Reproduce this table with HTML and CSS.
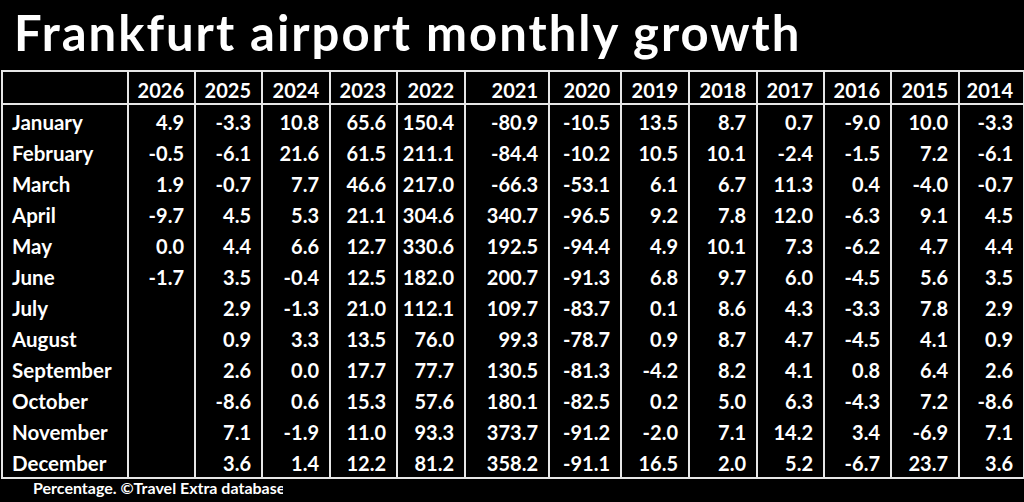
FILE: index.html
```html
<!DOCTYPE html>
<html lang="en">
<head>
<meta charset="utf-8">
<title>Frankfurt airport monthly growth</title>
<link rel="stylesheet" href="styles.css">
</head>
<body>
<div class="page">
  <h1 class="title">Frankfurt airport monthly growth</h1>
  <table class="grid">
    <colgroup>
      <col class="c-month">
      <col style="width:67px"><col style="width:67px"><col style="width:68px"><col style="width:67px"><col style="width:68px">
      <col style="width:84px"><col style="width:72px"><col style="width:68px"><col style="width:68px"><col style="width:67px">
      <col style="width:67px"><col style="width:68px"><col style="width:65px">
    </colgroup>
    <thead>
      <tr><th></th><th>2026</th><th>2025</th><th>2024</th><th>2023</th><th>2022</th><th>2021</th><th>2020</th><th>2019</th><th>2018</th><th>2017</th><th>2016</th><th>2015</th><th>2014</th></tr>
    </thead>
    <tbody>
      <tr><th>January</th><td>4.9</td><td>-3.3</td><td>10.8</td><td>65.6</td><td>150.4</td><td>-80.9</td><td>-10.5</td><td>13.5</td><td>8.7</td><td>0.7</td><td>-9.0</td><td>10.0</td><td>-3.3</td></tr>
      <tr><th>February</th><td>-0.5</td><td>-6.1</td><td>21.6</td><td>61.5</td><td>211.1</td><td>-84.4</td><td>-10.2</td><td>10.5</td><td>10.1</td><td>-2.4</td><td>-1.5</td><td>7.2</td><td>-6.1</td></tr>
      <tr><th>March</th><td>1.9</td><td>-0.7</td><td>7.7</td><td>46.6</td><td>217.0</td><td>-66.3</td><td>-53.1</td><td>6.1</td><td>6.7</td><td>11.3</td><td>0.4</td><td>-4.0</td><td>-0.7</td></tr>
      <tr><th>April</th><td>-9.7</td><td>4.5</td><td>5.3</td><td>21.1</td><td>304.6</td><td>340.7</td><td>-96.5</td><td>9.2</td><td>7.8</td><td>12.0</td><td>-6.3</td><td>9.1</td><td>4.5</td></tr>
      <tr><th>May</th><td>0.0</td><td>4.4</td><td>6.6</td><td>12.7</td><td>330.6</td><td>192.5</td><td>-94.4</td><td>4.9</td><td>10.1</td><td>7.3</td><td>-6.2</td><td>4.7</td><td>4.4</td></tr>
      <tr><th>June</th><td>-1.7</td><td>3.5</td><td>-0.4</td><td>12.5</td><td>182.0</td><td>200.7</td><td>-91.3</td><td>6.8</td><td>9.7</td><td>6.0</td><td>-4.5</td><td>5.6</td><td>3.5</td></tr>
      <tr><th>July</th><td></td><td>2.9</td><td>-1.3</td><td>21.0</td><td>112.1</td><td>109.7</td><td>-83.7</td><td>0.1</td><td>8.6</td><td>4.3</td><td>-3.3</td><td>7.8</td><td>2.9</td></tr>
      <tr><th>August</th><td></td><td>0.9</td><td>3.3</td><td>13.5</td><td>76.0</td><td>99.3</td><td>-78.7</td><td>0.9</td><td>8.7</td><td>4.7</td><td>-4.5</td><td>4.1</td><td>0.9</td></tr>
      <tr><th>September</th><td></td><td>2.6</td><td>0.0</td><td>17.7</td><td>77.7</td><td>130.5</td><td>-81.3</td><td>-4.2</td><td>8.2</td><td>4.1</td><td>0.8</td><td>6.4</td><td>2.6</td></tr>
      <tr><th>October</th><td></td><td>-8.6</td><td>0.6</td><td>15.3</td><td>57.6</td><td>180.1</td><td>-82.5</td><td>0.2</td><td>5.0</td><td>6.3</td><td>-4.3</td><td>7.2</td><td>-8.6</td></tr>
      <tr><th>November</th><td></td><td>7.1</td><td>-1.9</td><td>11.0</td><td>93.3</td><td>373.7</td><td>-91.2</td><td>-2.0</td><td>7.1</td><td>14.2</td><td>3.4</td><td>-6.9</td><td>7.1</td></tr>
      <tr><th>December</th><td></td><td>3.6</td><td>1.4</td><td>12.2</td><td>81.2</td><td>358.2</td><td>-91.1</td><td>16.5</td><td>2.0</td><td>5.2</td><td>-6.7</td><td>23.7</td><td>3.6</td></tr>
    </tbody>
  </table>
  <div class="footer"><span class="note">Percentage. ©Travel Extra database</span></div>
</div>
</body>
</html>
```
FILE: styles.css
```css
html, body {
  margin: 0;
  padding: 0;
  background: #000;
}
.page {
  width: 1024px;
  height: 502px;
  overflow: hidden;
  background: #000;
  color: #fff;
  font-family: Lato, "Open Sans", sans-serif;
  font-weight: 700;
}
.title {
  margin: 0;
  height: 70px;
  box-sizing: border-box;
  padding: 4px 0 0 14px;
  font-size: 49px;
  line-height: 56px;
  font-weight: 700;
  letter-spacing: 2px;
  white-space: nowrap;
}
.grid {
  border-collapse: collapse;
  table-layout: fixed;
  width: 1023px;
  margin-left: 1px;
  font-size: 20px;
}
.c-month { width: 126px; }
.grid th, .grid td {
  border-left: 2px solid #e6e6e6;
  border-right: 2px solid #e6e6e6;
  padding: 4px 10px 0 0;
  text-align: right;
  white-space: nowrap;
  font-weight: 700;
  line-height: 27px;
}
.grid thead th {
  border-top: 2px solid #e6e6e6;
  border-bottom: 2px solid #e6e6e6;
  padding-top: 5px;
  line-height: 26px;
}
.grid tbody th {
  text-align: left;
  padding: 4px 0 0 9px;
  font-size: 20.5px;
}
.grid tbody tr:last-child th,
.grid tbody tr:last-child td {
  border-bottom: 2px solid #e6e6e6;
}
.footer {
  padding: 0 0 0 33px;
}
.note {
  display: block;
  width: 250px;
  overflow: hidden;
  white-space: nowrap;
  font-size: 16px;
  line-height: 18px;
}
```
